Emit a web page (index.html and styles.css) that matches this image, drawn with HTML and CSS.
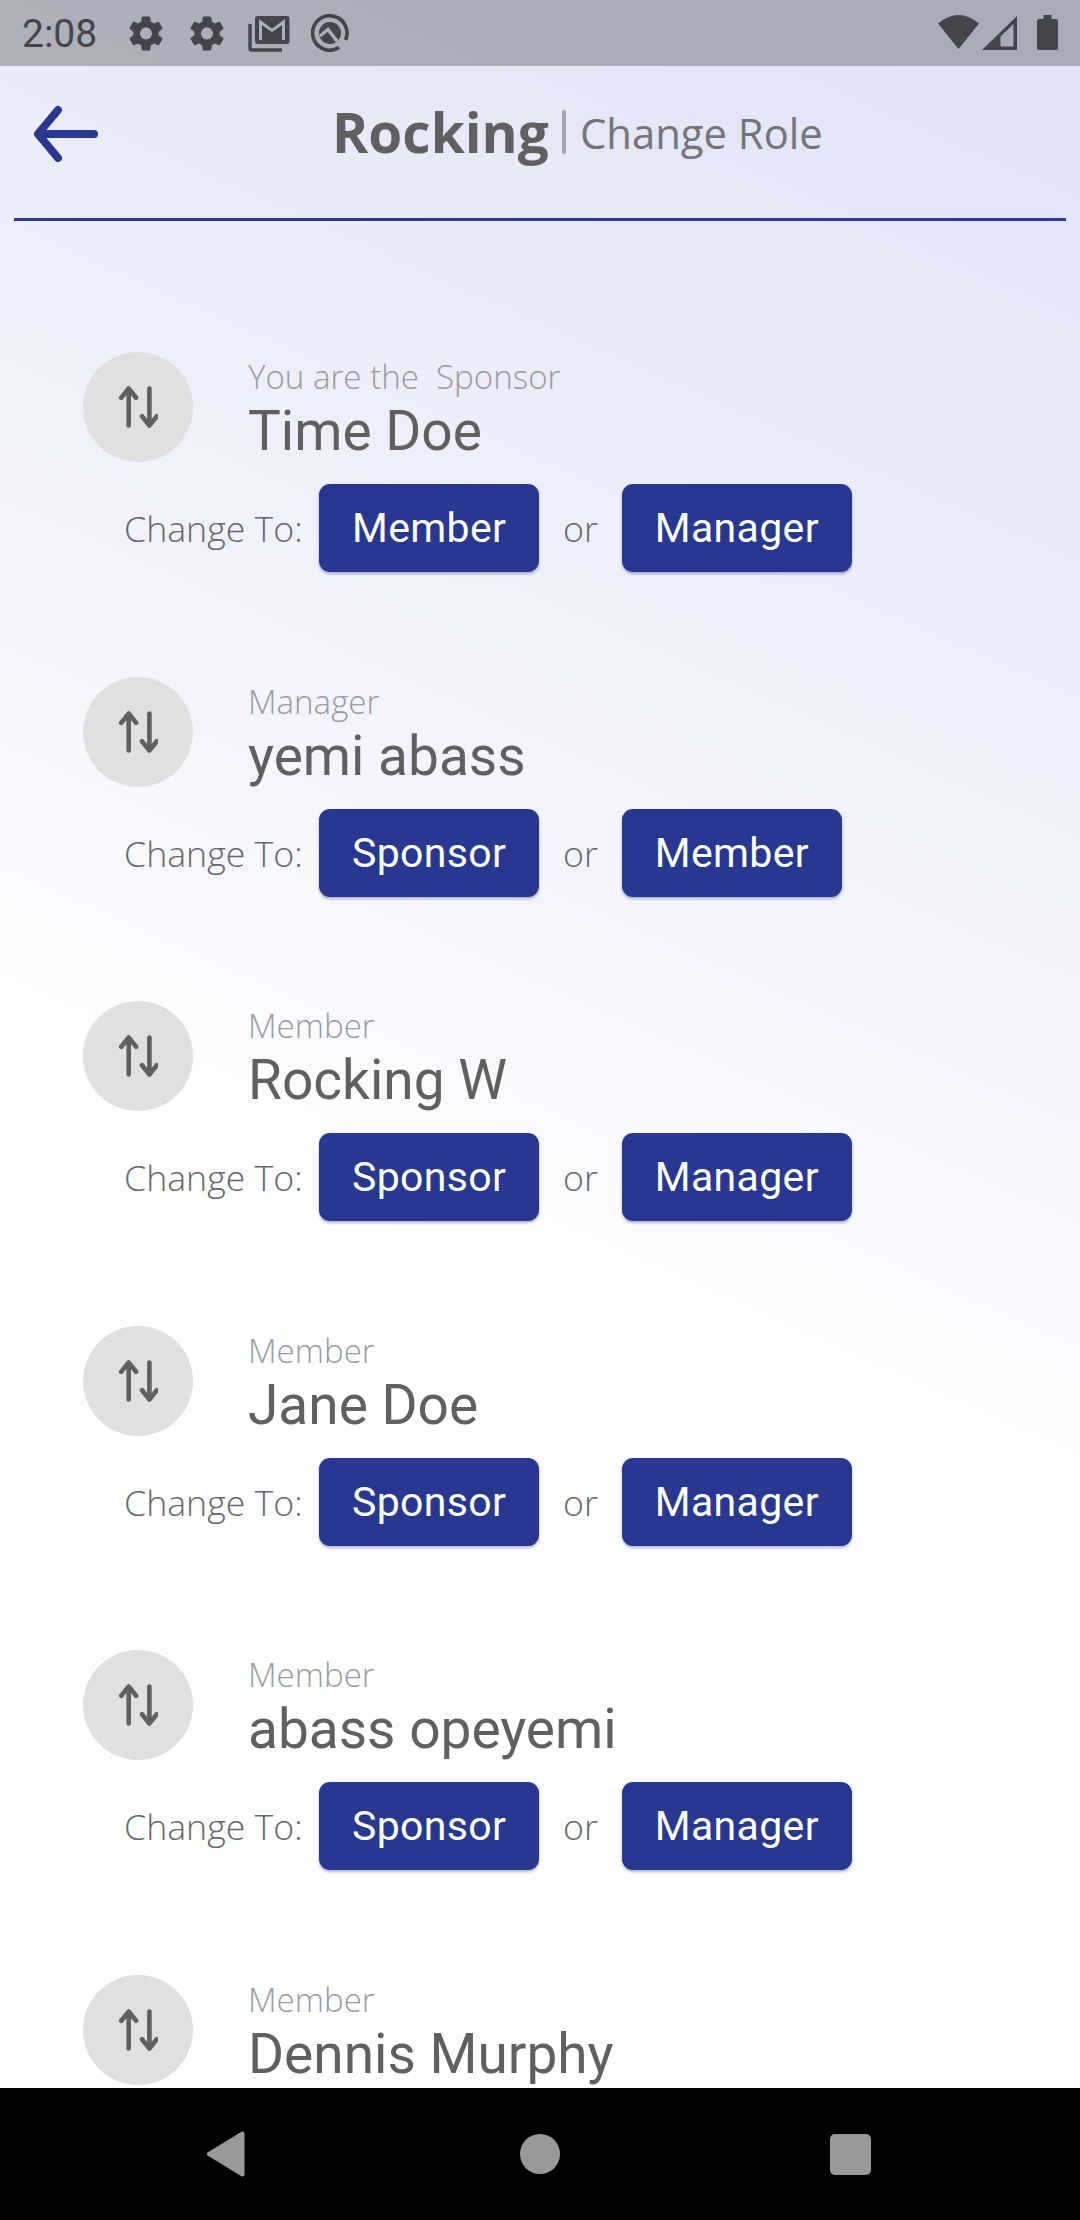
FILE: index.html
```html
<!DOCTYPE html>
<html lang="en">
<head>
<meta charset="utf-8">
<title>Change Role</title>
<link rel="stylesheet" href="styles.css">
</head>
<body>
<svg width="0" height="0" class="defs" aria-hidden="true">
  <symbol id="gear" viewBox="2 2 20 20"><path d="M19.43 12.98c.04-.32.07-.64.07-.98s-.03-.66-.07-.98l2.11-1.65c.19-.15.24-.42.12-.64l-2-3.46c-.12-.22-.39-.3-.61-.22l-2.49 1c-.52-.4-1.08-.73-1.69-.98l-.38-2.65C14.46 2.18 14.25 2 14 2h-4c-.25 0-.46.18-.49.42l-.38 2.65c-.61.25-1.17.59-1.69.98l-2.49-1c-.23-.09-.49 0-.61.22l-2 3.46c-.13.22-.07.49.12.64l2.11 1.65c-.04.32-.07.65-.07.98s.03.66.07.98l-2.11 1.65c-.19.15-.24.42-.12.64l2 3.46c.12.22.39.3.61.22l2.49-1c.52.4 1.08.73 1.69.98l.38 2.65c.03.24.24.42.49.42h4c.25 0 .46-.18.49-.42l.38-2.65c.61-.25 1.17-.59 1.69-.98l2.49 1c.23.09.49 0 .61-.22l2-3.46c.12-.22.07-.49-.12-.64l-2.11-1.65zM12 15.500c-1.930 0-3.500-1.570-3.500-3.500s1.570-3.500 3.500-3.500 3.500 1.570 3.500 3.500-1.570 3.500-3.500 3.500z"/></symbol>
  <symbol id="swap" viewBox="0 0 40 44"><path d="M10.700 40.500V4M3.300 12.800l7.400-9.300 7.400 9.300M31.400 3.500v36M24 31.200l7.400 9.300 7.400-9.300" fill="none" stroke="#606060" stroke-width="4.600" stroke-linecap="round" stroke-linejoin="round"/></symbol>
</svg>
<div class="screen">
  <div class="status">
    <span class="clock">2:08</span>
    <svg class="gear" width="34" height="35"><use href="#gear"/></svg>
    <svg class="gear second" width="34" height="35"><use href="#gear"/></svg>
    <svg class="mail" width="42" height="36" viewBox="0 0 42 36"><path d="M2 8v24q0 2 2 2h30" fill="none" stroke="#43454b" stroke-width="3.4"/><rect x="7" y="0" width="34.500" height="28" rx="3" fill="#43454b"/><path d="M12.500 24V6L24 14.500 35.500 6v18" fill="none" stroke="#abadb9" stroke-width="3"/></svg>
    <svg class="badge" width="38" height="38" viewBox="0 0 38 38"><path d="M28 33.500A17.200 17.200 0 1 1 34.500 26" fill="none" stroke="#43454b" stroke-width="3.600"/><circle cx="19" cy="19" r="11" fill="#43454b"/><path d="M9 22l8-6.500L29 31" fill="none" stroke="#abadb9" stroke-width="3.400"/></svg>
    <span class="grow"></span>
    <svg class="wifi" width="41" height="34" viewBox="0 0 41 34"><path d="M0 8.500Q20.500-8.500 41 8.500L20.500 34z" fill="#43454b"/></svg>
    <svg class="signal" width="35" height="34" viewBox="0 0 35 34"><path d="M35 0v34H0zM31.500 8L18.500 20.500v10h13z" fill="#43454b" fill-rule="evenodd"/></svg>
    <svg class="battery" width="21" height="35" viewBox="0 0 21 35"><path d="M6.500 0h8v4H19q2 0 2 2v27q0 2-2 2H2q-2 0-2-2V6q0-2 2-2h4.500z" fill="#43454b"/></svg>
  </div>
  <header class="header">
    <svg class="back" width="66" height="58" viewBox="0 0 66 58"><path d="M61 29H6M25 5L5 29l20 24" fill="none" stroke="#283790" stroke-width="8" stroke-linecap="round" stroke-linejoin="round"/></svg>
    <h1 class="title">Rocking</h1>
    <span class="bar"></span>
    <span class="subtitle">Change Role</span>
  </header>
  <main class="list">
    <section class="person">
      <div class="top"><span class="avatar"><svg width="40" height="44"><use href="#swap"/></svg></span><div class="info"><div class="role">You are the&nbsp; Sponsor</div><div class="name">Time Doe</div></div></div>
      <div class="actions"><span class="label">Change To:</span><button class="btn">Member</button><span class="or">or</span><button class="btn">Manager</button></div>
    </section>
    <section class="person">
      <div class="top"><span class="avatar"><svg width="40" height="44"><use href="#swap"/></svg></span><div class="info"><div class="role">Manager</div><div class="name">yemi abass</div></div></div>
      <div class="actions"><span class="label">Change To:</span><button class="btn">Sponsor</button><span class="or">or</span><button class="btn">Member</button></div>
    </section>
    <section class="person">
      <div class="top"><span class="avatar"><svg width="40" height="44"><use href="#swap"/></svg></span><div class="info"><div class="role">Member</div><div class="name">Rocking W</div></div></div>
      <div class="actions"><span class="label">Change To:</span><button class="btn">Sponsor</button><span class="or">or</span><button class="btn">Manager</button></div>
    </section>
    <section class="person">
      <div class="top"><span class="avatar"><svg width="40" height="44"><use href="#swap"/></svg></span><div class="info"><div class="role">Member</div><div class="name">Jane Doe</div></div></div>
      <div class="actions"><span class="label">Change To:</span><button class="btn">Sponsor</button><span class="or">or</span><button class="btn">Manager</button></div>
    </section>
    <section class="person">
      <div class="top"><span class="avatar"><svg width="40" height="44"><use href="#swap"/></svg></span><div class="info"><div class="role">Member</div><div class="name">abass opeyemi</div></div></div>
      <div class="actions"><span class="label">Change To:</span><button class="btn">Sponsor</button><span class="or">or</span><button class="btn">Manager</button></div>
    </section>
    <section class="person">
      <div class="top"><span class="avatar"><svg width="40" height="44"><use href="#swap"/></svg></span><div class="info"><div class="role">Member</div><div class="name">Dennis Murphy</div></div></div>
    </section>
  </main>
  <nav class="nav">
    <svg width="40" height="46" viewBox="0 0 40 46"><path d="M36.500 2.500v41L3 23z" fill="#999" stroke="#999" stroke-width="4" stroke-linejoin="round"/></svg>
    <span class="home"></span>
    <span class="recent"></span>
  </nav>
</div>
</body>
</html>
```
FILE: styles.css
```css
* { box-sizing: border-box; }
body { margin: 0; }
.defs { display: block; height: 0; }
.screen {
  width: 1080px;
  height: 2220px;
  display: flex;
  flex-direction: column;
  overflow: hidden;
  background: linear-gradient(204deg, #e1e4f6 5%, #eaecf9 21%, #f2f3fc 37%, #fff 58%);
}
.status {
  flex: none;
  height: 66px;
  display: flex;
  align-items: flex-start;
  padding: 0 22px;
  background: rgba(0, 0, 0, 0.25);
}
.clock {
  width: 107px;
  font: 39px/66px Roboto, sans-serif;
  color: #43454b;
  padding-top: 1px;
}
.gear { margin-top: 16px; fill: #43454b; }
.second { margin-left: 27px; }
.mail { margin: 16px 0 0 24px; }
.badge { margin: 14px 0 0 21px; }
.grow { flex: 1; }
.wifi { margin-top: 15px; }
.signal { margin: 16px 0 0 3px; }
.battery { margin: 15px 0 0 20px; }
.header {
  flex: none;
  height: 155px;
  margin: 0 14px;
  padding: 0 0 18px 19px;
  display: flex;
  align-items: center;
  border-bottom: 3px solid #303a9b;
}
.back { margin-top: 1px; }
.title {
  margin: 0 0 0 233px;
  width: 230px;
  padding-bottom: 3px;
  font: 700 55px/75px "Open Sans", sans-serif;
  color: #606060;
}
.bar { width: 4px; height: 44px; border-radius: 2px; margin-bottom: 2px; background: #a3a4ad; }
.subtitle {
  margin-left: 14px;
  font: 41.800px/60px "Open Sans", sans-serif;
  color: #73757b;
}
.list {
  flex: 1;
  min-height: 0;
  padding: 131px 0 0 83px;
  overflow: hidden;
}
.person { height: 324.6px; }
.top { display: flex; height: 132px; }
.avatar {
  width: 110px;
  height: 110px;
  border-radius: 50%;
  background: #e0e0e0;
  display: flex;
  align-items: center;
  justify-content: center;
}
.info { margin-left: 55px; white-space: nowrap; }
.role {
  font: 300 33.100px/45px "Open Sans", sans-serif;
  color: #9a9ba1;
  padding-top: 2px;
}
.name {
  font: 55px/64px Roboto, sans-serif;
  color: #606060;
}
.actions { display: flex; align-items: center; height: 88px; }
.label, .or { font: 300 35.700px/50px "Open Sans", sans-serif; color: #66676b; }
.label { width: 195px; margin-left: 41px; white-space: nowrap; }
.or { width: 82.500px; text-align: center; }
.btn {
  height: 88px;
  border: 0;
  border-radius: 11px;
  padding: 0 33px;
  background: #28378f;
  color: #fff;
  font: 41px/48px Roboto, sans-serif;
  letter-spacing: 0.350px;
  box-shadow: 0 2px 3px rgba(30, 40, 120, 0.35);
}
.nav {
  flex: none;
  height: 132px;
  background: #000;
  display: flex;
  align-items: center;
  padding-left: 206px;
}
.home { width: 40px; height: 40px; border-radius: 50%; background: #999; margin-left: 274px; }
.recent { width: 41px; height: 41px; border-radius: 5px; background: #999; margin-left: 270px; }
```
